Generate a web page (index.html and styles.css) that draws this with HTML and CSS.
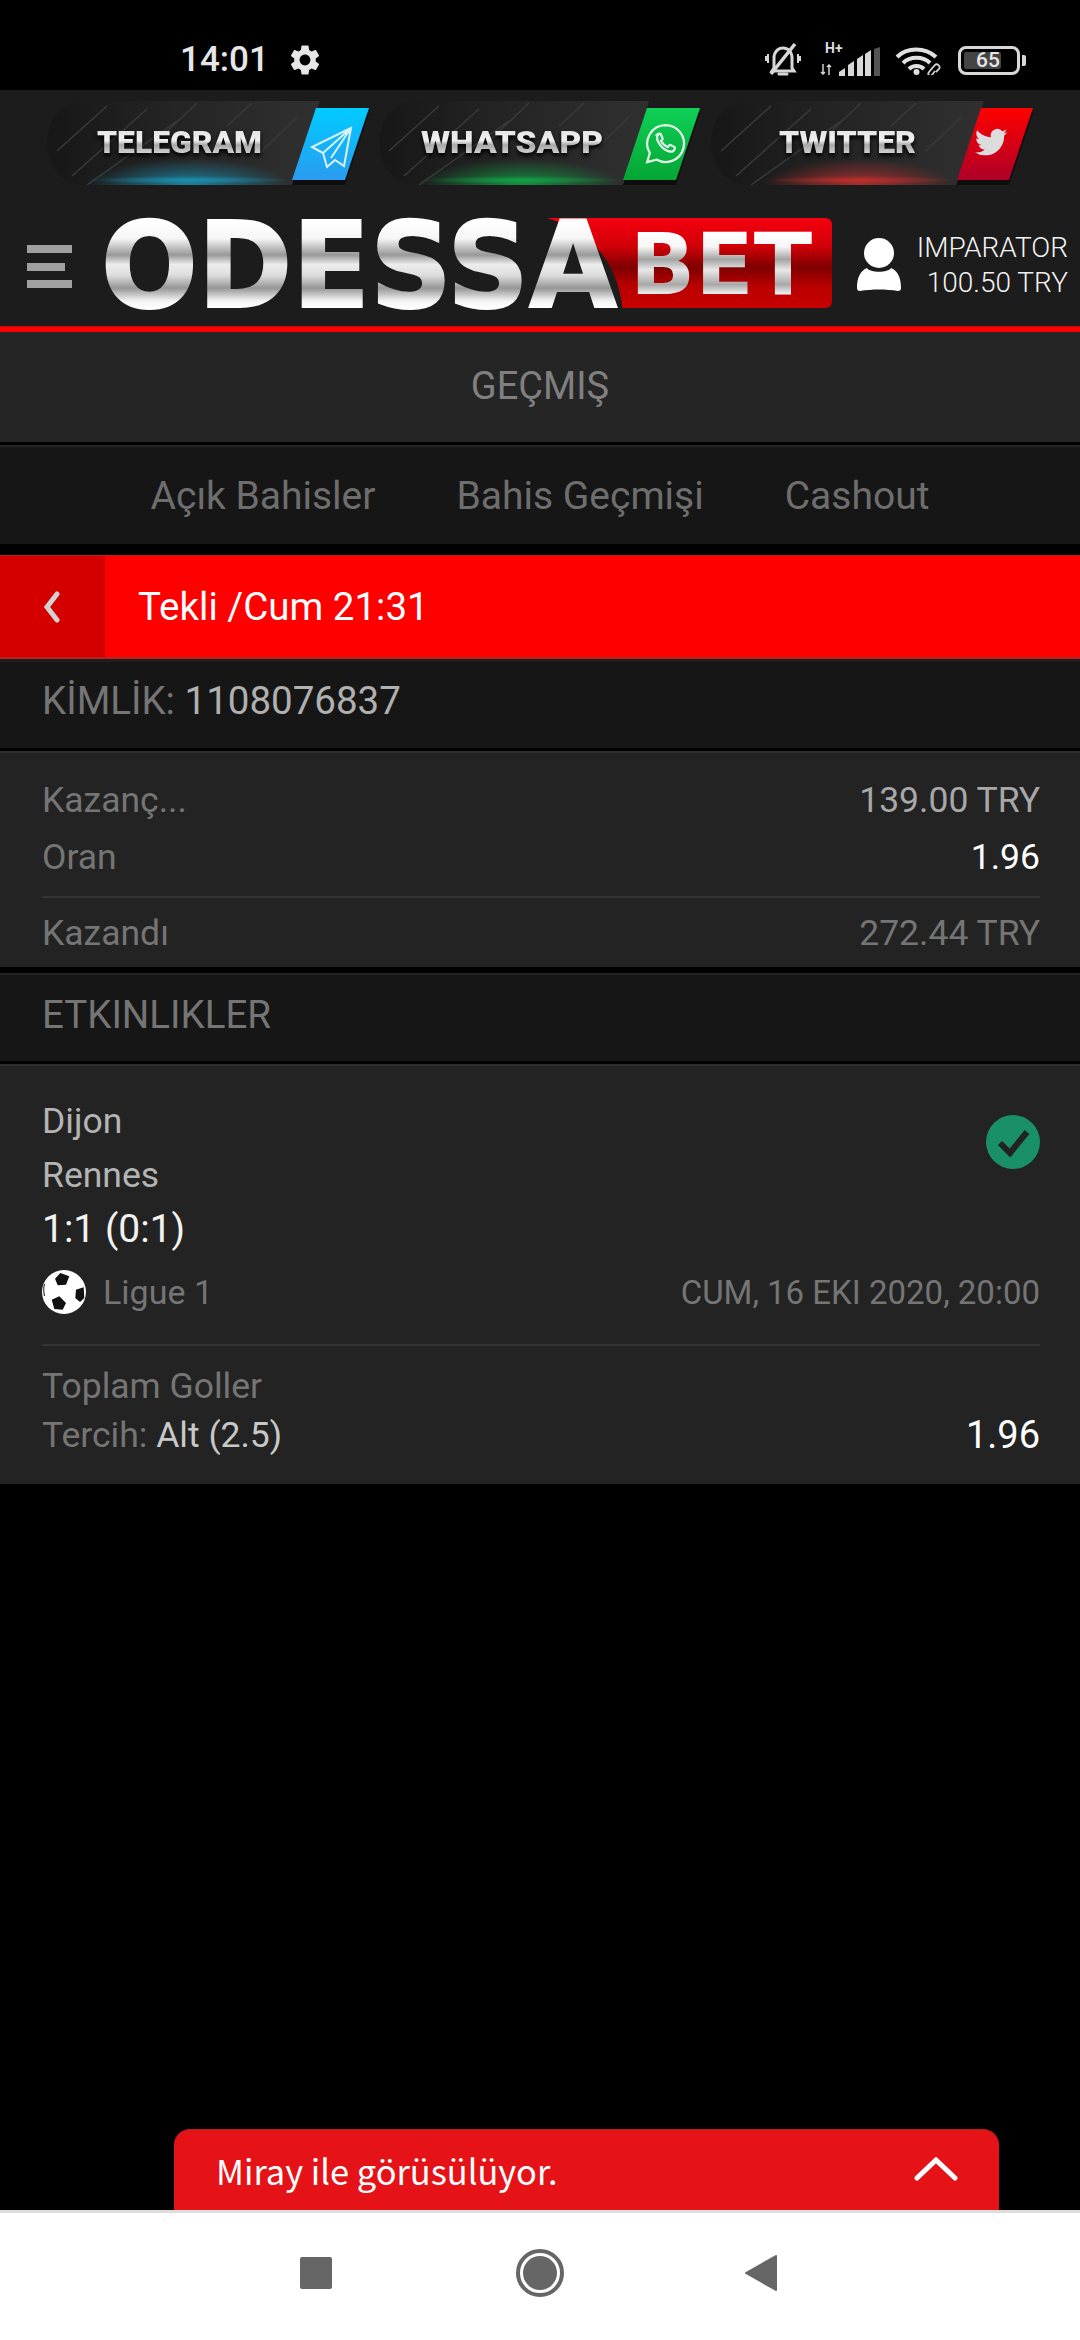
FILE: index.html
```html
<!DOCTYPE html>
<html lang="tr">
<head>
<meta charset="utf-8">
<title>Geçmiş</title>
<link rel="stylesheet" href="styles.css">
</head>
<body>
<div class="phone">
  <svg class="defs" width="0" height="0" aria-hidden="true">
    <defs>
      <linearGradient id="chrome" gradientUnits="userSpaceOnUse" x1="0" y1="3" x2="0" y2="90">
        <stop offset="0" stop-color="#ffffff"/><stop offset=".2" stop-color="#f6f6f6"/>
        <stop offset=".39" stop-color="#989898"/><stop offset=".5" stop-color="#ececec"/>
        <stop offset=".62" stop-color="#dedede"/><stop offset=".77" stop-color="#969696"/><stop offset=".92" stop-color="#f4f4f4"/><stop offset="1" stop-color="#ffffff"/>
      </linearGradient>
      <linearGradient id="chromeBet" gradientUnits="userSpaceOnUse" x1="0" y1="13" x2="0" y2="76">
        <stop offset="0" stop-color="#ffffff"/><stop offset=".25" stop-color="#f6f6f6"/>
        <stop offset=".45" stop-color="#a4a4a4"/><stop offset=".62" stop-color="#e8e8e8"/>
        <stop offset=".85" stop-color="#a8a8a8"/><stop offset="1" stop-color="#f2f2f2"/>
      </linearGradient>
      <linearGradient id="chromeS" gradientUnits="userSpaceOnUse" x1="0" y1="29" x2="0" y2="52">
        <stop offset="0" stop-color="#e4e4e4"/><stop offset=".45" stop-color="#f0f0f0"/>
        <stop offset=".65" stop-color="#a8a8a8"/><stop offset="1" stop-color="#d0d0d0"/>
      </linearGradient>
      <linearGradient id="redLogo" x1="0" y1="0" x2="0" y2="1">
        <stop offset="0" stop-color="#f4000e"/><stop offset=".3" stop-color="#d40008"/>
        <stop offset=".55" stop-color="#7e0000"/><stop offset=".75" stop-color="#b80000"/><stop offset="1" stop-color="#c80000"/>
      </linearGradient>
      <linearGradient id="pill" x1="0" y1="0" x2="1" y2="0">
        <stop offset="0" stop-color="#171717"/><stop offset=".5" stop-color="#252525"/><stop offset="1" stop-color="#303030"/>
      </linearGradient>
      <linearGradient id="blue" x1="0" y1="0" x2="0" y2="1"><stop offset="0" stop-color="#00ccff"/><stop offset="1" stop-color="#2a9bf0"/></linearGradient>
      <linearGradient id="green" x1="0" y1="0" x2="0" y2="1"><stop offset="0" stop-color="#0fd056"/><stop offset="1" stop-color="#04a535"/></linearGradient>
      <linearGradient id="red" x1="0" y1="0" x2="0" y2="1"><stop offset="0" stop-color="#ff0000"/><stop offset="1" stop-color="#ae0028"/></linearGradient>
      <radialGradient id="glowB"><stop offset="0" stop-color="#1a9cc0" stop-opacity=".75"/><stop offset="1" stop-color="#1a9cc0" stop-opacity="0"/></radialGradient>
      <radialGradient id="glowG"><stop offset="0" stop-color="#10b04a" stop-opacity=".75"/><stop offset="1" stop-color="#10b04a" stop-opacity="0"/></radialGradient>
      <radialGradient id="glowR"><stop offset="0" stop-color="#d03030" stop-opacity=".75"/><stop offset="1" stop-color="#d03030" stop-opacity="0"/></radialGradient>
    </defs>
  </svg>

  <div class="status">
    <span class="clock">14:01</span>
    <svg class="gear" viewBox="0 0 24 24"><path fill="#e6e6e6" d="M19.14 12.94c.04-.3.06-.61.06-.94 0-.32-.02-.64-.07-.94l2.03-1.58a.49.49 0 0 0 .12-.61l-1.92-3.32a.488.488 0 0 0-.59-.22l-2.39.96c-.5-.38-1.03-.7-1.62-.94l-.36-2.54a.484.484 0 0 0-.48-.41h-3.84c-.24 0-.43.17-.47.41l-.36 2.54c-.59.24-1.13.57-1.62.94l-2.39-.96c-.22-.08-.47 0-.59.22L2.74 8.87c-.12.21-.08.47.12.61l2.03 1.58c-.05.3-.09.63-.09.94s.02.64.07.94l-2.03 1.58a.49.49 0 0 0-.12.61l1.92 3.32c.12.22.37.29.59.22l2.39-.96c.5.38 1.03.7 1.62.94l.36 2.54c.05.24.24.41.48.41h3.84c.24 0 .44-.17.47-.41l.36-2.54c.59-.24 1.13-.56 1.62-.94l2.39.96c.22.08.47 0 .59-.22l1.92-3.32c.12-.22.07-.47-.12-.61l-2.01-1.58zM12 15.6c-1.98 0-3.6-1.62-3.6-3.6s1.62-3.6 3.6-3.6 3.6 1.62 3.6 3.6-1.62 3.6-3.6 3.6z"/></svg>
    <div class="status-right">
      <svg class="i-bell" viewBox="0 0 36 34" fill="none" stroke="#d8d8d8" stroke-width="3">
        <path d="M9 25V15c0-6 4-10 9-10s9 4 9 10v10l2 3H7z"/>
        <path d="M14 31h8" stroke-linecap="round"/>
        <path d="M3 11v9M33 11v9M1 13v5M35 13v5" stroke-width="2"/>
        <path d="M30 1 6 31" stroke-width="3.5"/>
      </svg>
      <div class="net">
        <span class="hplus">H+</span>
        <svg class="i-arrows" viewBox="0 0 12 11" fill="none" stroke="#d0d0d0" stroke-width="1.5"><path d="M3 0v10M1 8l2 2 2-2M9 11V1M7 3l2-2 2 2"/></svg>
        <svg class="i-signal" viewBox="0 0 41 29">
          <path fill="#d8d8d8" d="M0 29v-4l6-4v8zM9 29V18l6-4v15zM18 29V12l6-4v21zM26 29V7l6-4v26z"/>
          <path fill="#555" d="M35 29V2l6-2v29z"/>
        </svg>
      </div>
      <svg class="i-wifi" viewBox="0 0 48 29" fill="none">
        <path d="M2 11C12 1 30 1 41 11M8 17c7-7 20-7 27 0M14 23c4-4 11-4 15 0" stroke="#e0e0e0" stroke-width="4"/>
        <circle cx="21.500" cy="26" r="3" fill="#e0e0e0"/>
        <path d="M34 26l6-7c2-2 6 1 4 4l-3 3M38 21l-4 5c-2 3 1 5 3 3l3-4" stroke="#d0d0d0" stroke-width="1.800"/>
      </svg>
      <div class="battery"><span class="cell"><span class="cell-fill"></span><span class="cell-num">65</span></span><span class="nub"></span></div>
    </div>
  </div>

  <header class="top">
    <div class="banners">
      <svg class="banner" viewBox="0 0 322 84">
        <path fill="url(#pill)" d="M36 0H273L245 84H36A36 42 0 0 1 36 0z"/>
        <path class="streak" d="M10 50 60 5M25 75 100 8M110 40 150 2M40 84 130 20M180 25 205 2M215 50 250 16"/>
        <ellipse cx="142" cy="84" rx="102" ry="26" fill="url(#glowB)"/>
        <ellipse cx="142" cy="79" rx="102" ry="4" fill="url(#glowB)"/>
        <path fill="#0d0d0d" d="M269 12h53l-24 72h-53z"/>
        <path fill="url(#blue)" d="M269 7h53l-24 72h-53z"/>
        <text class="bn-text" x="50" y="52" textLength="165" lengthAdjust="spacingAndGlyphs">TELEGRAM</text>
        <path d="M304 27 265 46l11 6 4 14 8-7 9 6zM304 27 276 52M304 27 284 57" fill="none" stroke="#d8f2fb" stroke-width="2"/>
      </svg>
      <svg class="banner" viewBox="0 0 322 84">
        <path fill="url(#pill)" d="M36 0H270L245 84H36A36 42 0 0 1 36 0z"/>
        <path class="streak" d="M10 50 60 5M25 75 100 8M110 40 150 2M40 84 130 20M180 25 205 2M215 50 250 16"/>
        <ellipse cx="142" cy="84" rx="102" ry="26" fill="url(#glowG)"/>
        <ellipse cx="142" cy="79" rx="102" ry="4" fill="url(#glowG)"/>
        <path fill="#0d0d0d" d="M268 12h53l-24 72h-53z"/>
        <path fill="url(#green)" d="M268 7h53l-24 72h-53z"/>
        <text class="bn-text" x="42" y="52" textLength="182" lengthAdjust="spacingAndGlyphs">WHATSAPP</text>
        <g transform="translate(262 18) scale(2.05)" fill="none" stroke="#dff5e6" stroke-width="1.100">
          <path d="M12 3a9 9 0 0 0-7.700 13.600L3 21l4.500-1.200A9 9 0 1 0 12 3z"/>
          <path d="M8.500 7.500c-.8.7-1 2 0 3.800 1 1.900 2.800 3.600 4.800 4.400 1.400.5 2.600 0 3.100-1 .2-.4.2-.8 0-1l-2-1c-.3-.1-.5 0-.7.2l-.6.8c-1.300-.5-2.600-1.700-3.300-3l.6-.7c.2-.2.2-.5.1-.7l-.9-2c-.2-.3-1-.3-1.600.2z"/>
        </g>
      </svg>
      <svg class="banner" viewBox="0 0 322 84">
        <path fill="url(#pill)" d="M36 0H273L245 84H36A36 42 0 0 1 36 0z"/>
        <path class="streak" d="M10 50 60 5M25 75 100 8M110 40 150 2M40 84 130 20M180 25 205 2M215 50 250 16"/>
        <ellipse cx="148" cy="84" rx="96" ry="26" fill="url(#glowR)"/>
        <ellipse cx="148" cy="79" rx="96" ry="4" fill="url(#glowR)"/>
        <path fill="#0d0d0d" d="M270 12h52l-24 72h-52z"/>
        <path fill="url(#red)" d="M270 7h52l-24 72h-52z"/>
        <text class="bn-text" x="68" y="52" textLength="137" lengthAdjust="spacingAndGlyphs">TWITTER</text>
        <g transform="translate(264 25) scale(1.350)"><path fill="#dcdcdc" d="M23.950 4.570a10 10 0 0 1-2.820.775 4.960 4.960 0 0 0 2.163-2.723c-.951.555-2.005.959-3.127 1.184a4.920 4.920 0 0 0-8.384 4.482C7.690 8.095 4.067 6.130 1.640 3.162a4.820 4.820 0 0 0-.666 2.475c0 1.710.870 3.213 2.188 4.096a4.900 4.900 0 0 1-2.228-.616v.060a4.920 4.920 0 0 0 3.946 4.827 5 5 0 0 1-2.212.085 4.940 4.940 0 0 0 4.604 3.417 9.870 9.870 0 0 1-6.102 2.105c-.390 0-.779-.023-1.170-.067a13.995 13.995 0 0 0 7.557 2.209c9.053 0 13.998-7.496 13.998-13.985 0-.210 0-.420-.015-.630a9.900 9.900 0 0 0 2.460-2.548z"/></g>
      </svg>
    </div>
    <div class="brand">
      <div class="burger"><span></span><span class="short"></span><span></span></div>
      <svg class="logo" viewBox="0 -6 732 104">
        <path fill="url(#redLogo)" d="M440 0H722Q729 0 729 7V83Q729 90 722 90H518C512 50 490 14 440 0z"/>
        <path fill="none" stroke="#1c1c1c" stroke-width="5" d="M438 1C490 14 512 50 517 90"/>
        <text class="logo-a" x="-2" y="89" textLength="516" lengthAdjust="spacingAndGlyphs">ODESSA</text>
        <text class="logo-b" x="527" y="76" textLength="182" lengthAdjust="spacingAndGlyphs">BET</text>
      </svg>
      <svg class="user" viewBox="0 0 44 55"><circle cx="22" cy="15" r="15" fill="#fff"/><path fill="#fff" d="M0 50c0-10 3-17 10-20 3 5 21 5 24 0 7 3 10 10 10 20 0 2-1 3-3 3-12-2-26-2-38 0-2 0-3-1-3-3z"/></svg>
      <div class="account"><div>IMPARATOR</div><div>100.50 TRY</div></div>
    </div>
  </header>
  <div class="rule"></div>

  <main class="main">
    <div class="page-title">GEÇMIŞ</div>
    <nav class="tabs"><span>Açık Bahisler</span><span>Bahis Geçmişi</span><span>Cashout</span></nav>
    <div class="redbar">
      <div class="back"><svg viewBox="0 0 20 32" class="chev"><path d="M15 3 5 16l10 13" fill="none" stroke="#d2d2d2" stroke-width="5" stroke-linecap="round"/></svg></div>
      <div class="redtitle">Tekli /Cum 21:31</div>
    </div>
    <div class="idbar"><span class="mute">KİMLİK:</span> <span class="idval">1108076837</span></div>
    <section class="summary">
      <div class="row"><span class="mute">Kazanç...</span><span class="soft">139.00 TRY</span></div>
      <div class="row"><span class="mute">Oran</span><span class="bright">1.96</span></div>
      <div class="hr"></div>
      <div class="row row-win"><span class="mute">Kazandı</span><span class="mute">272.44 TRY</span></div>
    </section>
    <div class="events-h">ETKINLIKLER</div>
    <section class="event">
      <div class="teams-row">
        <div>
          <div class="team">Dijon</div>
          <div class="team">Rennes</div>
          <div class="score">1:1 (0:1)</div>
        </div>
        <svg class="ok" viewBox="0 0 54 54"><circle cx="27" cy="27" r="27" fill="#1a9068"/><path d="M14 28l10 10 17-21" fill="none" stroke="#222" stroke-width="6"/></svg>
      </div>
      <div class="league-row">
        <div class="league">
          <svg class="ball" viewBox="0 0 44 44">
            <circle cx="22" cy="22" r="22" fill="#fff"/>
            <path fill="#111" d="M13 8.700 18.300 3l9 3.300L24 14.700l-8.300.6zM34 19.700l7.700-2.400.6 10.700-4.300 4-4.700-4zM9.700 29.700l7.600-3.400L24 33l-3.300 6.700-8.400-.7z"/>
            <path fill="none" stroke="#111" stroke-width="1" d="M2.500 14c-1 3-1 8 0 12"/>
          </svg>
          <span class="mute league-name">Ligue 1</span>
        </div>
        <span class="mute date">CUM, 16 EKI 2020, 20:00</span>
      </div>
      <div class="hr hr-ev"></div>
      <div class="mute market">Toplam Goller</div>
      <div class="pick-row"><div><span class="mute">Tercih:</span> <span class="pick">Alt (2.5)</span></div><span class="odd">1.96</span></div>
    </section>
    <div class="spacer"></div>
    <div class="chat">
      <span class="chat-text">Miray ile görüsülüyor.</span>
      <svg class="chat-up" viewBox="0 0 44 24"><path d="M3 21 22 3l19 18" fill="none" stroke="#fff" stroke-width="5" stroke-linecap="round"/></svg>
    </div>
  </main>

  <footer class="navbar">
    <span class="nav-square"></span>
    <svg class="nav-home" viewBox="0 0 48 48"><circle cx="24" cy="24" r="22" fill="none" stroke="#666" stroke-width="4"/><circle cx="24" cy="24" r="17" fill="#666"/></svg>
    <svg class="nav-back" viewBox="0 0 32 36"><path fill="#666" stroke="#666" stroke-width="2" stroke-linejoin="round" d="M31 1v34L1 18z"/></svg>
  </footer>
</div>
</body>
</html>
```
FILE: styles.css
```css
* { box-sizing: border-box; }
html, body { margin: 0; background: #000; }
.phone {
  width: 1080px; height: 2340px; display: flex; flex-direction: column;
  background: #000; font-family: Roboto, "Liberation Sans", sans-serif; overflow: hidden;
}
.defs { position: absolute; }

/* status bar */
.status { height: 90px; flex: none; display: flex; align-items: center; padding: 30px 0 0 180px; color: #e6e6e6; }
.clock { font-size: 35px; font-weight: 500; line-height: 40px; }
.gear { width: 36px; height: 36px; margin-left: 18px; }
.status-right { margin-left: auto; padding-right: 54px; display: flex; align-items: center; height: 34px; }
.i-bell { width: 36px; height: 34px; }
.net { width: 60px; height: 32px; margin-left: 19px; position: relative; }
.hplus { position: absolute; left: 5px; top: -4px; font-size: 14px; line-height: 16px; font-weight: 700; color: #ddd; }
.i-arrows { position: absolute; left: 0; bottom: 1px; width: 12px; height: 11px; }
.i-signal { position: absolute; right: 0; bottom: 0; width: 41px; height: 29px; }
.i-wifi { width: 48px; height: 29px; margin-left: 15px; }
.battery { margin-left: 15px; display: flex; align-items: center; gap: 2px; }
.cell { width: 62px; height: 29px; border: 3.5px solid #d8d8d8; border-radius: 8px; position: relative; display: block; }
.cell-fill { position: absolute; left: 3px; top: 3px; bottom: 3px; width: 37px; background: #444; border-radius: 2px; }
.cell-num { position: absolute; left: 15px; top: 0; line-height: 22px; font-size: 21px; font-weight: 500; color: #e6e6e6; }
.nub { width: 4px; height: 11px; background: #d8d8d8; border-radius: 0 2px 2px 0; }

/* header */
.top { height: 236px; flex: none; background: #1c1c1c; padding-top: 11px; }
.banners { display: flex; gap: 10px; padding-left: 47px; height: 84px; }
.banner { width: 322px; height: 84px; flex: none; }
.streak { stroke: #3a3a3a; stroke-width: 1.5; fill: none; }
.bn-text {
  font-family: Roboto, sans-serif; font-weight: 900; font-size: 32px; fill: url(#chromeS);
  filter: drop-shadow(0 3px 2px #000) blur(.4px);
}
.brand { display: flex; align-items: flex-start; padding: 27px 12px 0 27px; }
.burger { width: 45px; margin-top: 33px; display: flex; flex-direction: column; gap: 9.5px; }
.burger span { display: block; height: 8px; background: #a0a0a0; }
.burger .short { width: 38px; }
.logo { width: 732px; height: 104px; margin-left: 31px; flex: none; overflow: visible; }
.logo-a { font-family: "DejaVu Sans", sans-serif; font-weight: 700; font-size: 119px; fill: url(#chrome); stroke: url(#chrome); stroke-width: 2px; }
.logo-b { font-family: "DejaVu Sans", sans-serif; font-weight: 700; font-size: 86px; fill: url(#chromeBet); }
.user { width: 44px; height: 55px; flex: none; margin: 26px 0 0 22px; }
.account { margin-left: auto; text-align: right; font-size: 28px; line-height: 35px; font-weight: 300; color: #f2f2f2; margin-top: 18px; white-space: nowrap; }
.rule { height: 6px; flex: none; background: #f00; border-top: 1px solid #b01010; }

/* main */
.main { flex: 1; display: flex; flex-direction: column; min-height: 0; font-size: 35.5px; }
.page-title {
  height: 113px; flex: none; background: #252525; border-bottom: 3px solid #000;
  color: #808080; font-size: 38px; line-height: 108px; text-align: center;
}
.tabs {
  height: 99px; flex: none; background: #161616; border-top: 2px solid #242424;
  display: flex; justify-content: center; gap: 81px; align-items: center;
  color: #6e6e6e; font-size: 39px;
}
.redbar {
  height: 104px; flex: none; margin-top: 11px; background: #f00; display: flex; align-items: center;
  border-top: 1px solid #b92020; border-bottom: 2px solid #b92020;
}
.back { width: 105px; align-self: stretch; background: #d40000; display: flex; align-items: center; padding-left: 42px; }
.chev { width: 20px; height: 32px; }
.redtitle { margin-left: 33px; color: #fff; font-size: 38.5px; }
.idbar { height: 89px; flex: none; background: #161616; border-top: 3px solid #1e1e1e; padding-left: 42px; font-size: 38.5px; line-height: 78px; }
.mute { color: #757575; }
.idval { color: #b0b0b0; }
.soft { color: #a8a8a8; }
.bright { color: #fff; }
.summary { height: 219px; flex: none; background: #232323; border-top: 3px solid #000; box-shadow: inset 0 2px 0 #2e2e2e; padding: 21px 40px 0 42px; }
.row { display: flex; justify-content: space-between; height: 57px; line-height: 57px; }
.hr { height: 2px; background: #333; margin-top: 10px; }
.row-win { margin-top: 7px; }
.events-h {
  height: 97px; flex: none; background: #161616; border-top: 6px solid #000; border-bottom: 3px solid #000;
  box-shadow: inset 0 2px 0 #222;
  padding-left: 42px; color: #757575; font-size: 38.5px; line-height: 84px;
}
.event { height: 420px; flex: none; background: #232323; padding: 30px 40px 0 42px; box-shadow: inset 0 2px 0 #2e2e2e; }
.teams-row { display: flex; justify-content: space-between; align-items: flex-start; }
.team { height: 54px; line-height: 54px; color: #b4b4b4; }
.score { height: 54px; line-height: 54px; color: #f2f2f2; font-size: 39px; }
.ok { width: 54px; height: 54px; margin: 21px 0 0; flex: none; }
.league-row { display: flex; justify-content: space-between; align-items: center; height: 44px; margin-top: 14px; font-size: 34px; }
.league { display: flex; align-items: center; }
.ball { width: 44px; height: 44px; }
.league-name { margin-left: 17px; }
.date { font-size: 33px; }
.hr-ev { margin-top: 30px; }
.market { line-height: 50px; height: 49px; margin-top: 15px; }
.pick-row { display: flex; justify-content: space-between; align-items: center; height: 50px; }
.pick { color: #c8c8c8; }
.odd { color: #fff; font-size: 38px; }
.spacer { flex: 1; }
.chat {
  height: 81px; width: 825px; flex: none; margin-left: 174px; background: #e51317; border-radius: 16px 16px 0 0;
  display: flex; align-items: center; justify-content: space-between; padding: 0 41px 0 42px;
  border-top: 1px solid #b72020;
}
.chat-text { color: #fff; font-family: "Noto Sans CJK SC", "Noto Sans", sans-serif; font-size: 34.4px; line-height: 40px; }
.chat-up { width: 44px; height: 24px; margin-top: -2px; }

/* nav */
.navbar { height: 130px; flex: none; background: #fff; border-top: 3px solid #ddd; display: flex; align-items: center; position: relative; padding-left: 300px; padding-bottom: 8px; }
.nav-square { width: 32px; height: 32px; background: #666; border-radius: 2px; }
.nav-home { width: 48px; height: 48px; margin-left: 184px; }
.nav-back { width: 32px; height: 36px; margin-left: 181px; }
```
